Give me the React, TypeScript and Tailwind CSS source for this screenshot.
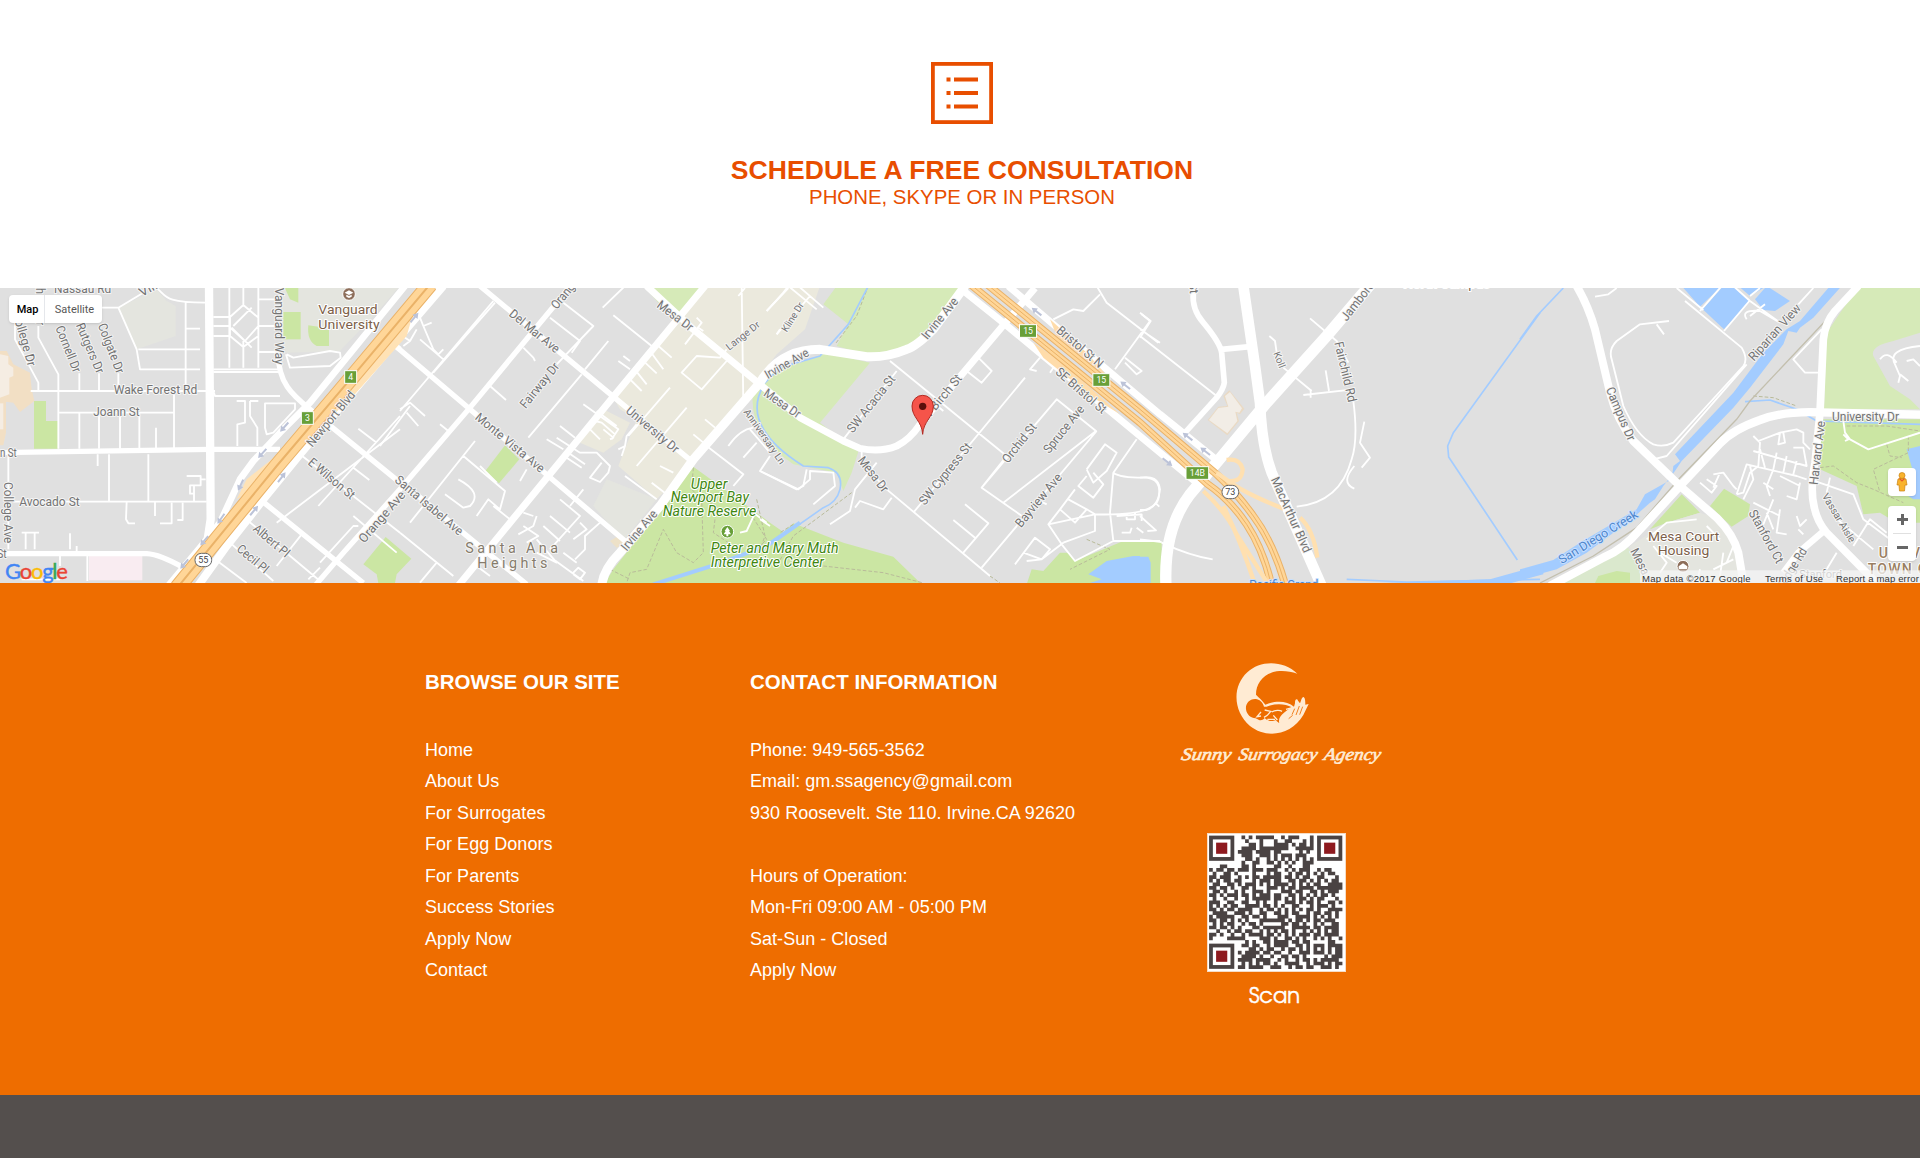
import React from "react";

type Label = [text: string, x1: number, y1: number, x2: number, y2: number, size?: number, kind?: string];
type Tile = {
  x: number;
  areas: [string, string][];
  minor: string;
  mid?: string;
  trails?: string;
  streams?: string;
  labels: Label[];
};

const PARK = "#cbe6a3";
const GOLF = "#d6eab8";
const WATER = "#a3ccff";
const CAMPUS = "#e4e5df";
const BEIGE = "#ebe9dd";

const tiles: Tile[] = [
  {
    x: 0,
    areas: [
      ["M355 65L470 10L500 45L527 60V150L410 190Z", CAMPUS],
      ["M850 0H1200L1130 80L1020 195L860 200L840 150Z", CAMPUS],
      ["M852 0H895V50L870 40Z", PARK],
      ["M850 78H902V160H850Z", PARK],
      ["M925 118L955 122L960 132H987V180H950Q920 165 925 118Z", PARK],
      ["M102 345H138V405H175V488H102Z", PARK],
      ["M0 195H20L40 235L90 260L95 310L103 345L60 378L40 350L0 345Z", "#f2dfc4"],
      ["M0 340H18V440L10 478H0Z", "#f2dfc4"],
      ["M0 205L25 210V235L40 245V270L28 275V325L0 335Z", "#f5ede3"],
      ["M0 352H10V430H0Z", "#f5ede3"],
      ["M267 810H427V883H267Z", "#f9ecf1"],
      ["M1157 753L1234 818L1190 865L1185 891H1135L1130 865L1090 835Z", PARK],
    ],
    minor:
      "M92 315H645M178 380H520M40 647H620M238 262V315M297 262V315M355 262V315M45 100V160L115 290V315M115 120V155L175 265V488M238 380V488M297 380V488M360 380V488M418 380V488M522 315V488M468 425V488M355 65L410 190L420 250H600M415 190H600M557 50V300M557 128H600M305 65H355L430 20M470 6C500 30 490 50 615 50M640 93H690L730 57L775 95V120L735 165L690 125V93M640 120H690V150L730 183L775 150V120H835M640 150H690M688 0V245M730 0V60M730 165V245M775 0V245M775 40H840M775 198H840M640 250H835M640 258H835M640 315L645 330H840M755 65L700 120M695 125L755 185M860 205L880 215L990 195L1020 200L1022 215L990 240L870 245L858 205M710 345H735V410L712 415V480M750 345H775M750 345V390L772 425V480M795 352H885V370L820 440L800 445L795 425ZM293 505V540M327 505V647M445 505V647M25 500V790M380 647L378 700L385 712H405M465 647V690M515 650V712H480M548 650V702H532M560 570H602V598H570V623H582M602 580H617M582 598V645M65 740H117M77 740V790M104 740V790M210 742V790M230 780V795M180 810V840M262 810V885M65 880H180M1075 428L1130 470M1200 390L955 660M1060 545L1108 582M900 505L1200 740M1200 430L830 710M1060 690L1190 800M960 830L1060 720L1075 720M745 705L960 885M690 770L820 885M645 820L740 891M905 745L830 840M960 845L925 880",
    mid: "M0 500L630 490L840 490M0 803H440Q480 805 550 845M835 190C830 290 880 330 930 370L1200 590M780 640L1090 891M1175 170L1200 190",
    labels: [
      ["Nassau Rd", 162, 20, 334, 20],
      ["Villa", 425, 33, 495, -5],
      ["h", 108, 6, 108, 24],
      ["r", 108, 106, 108, 118],
      ["College Dr", 38, 82, 84, 243],
      ["Cornell Dr", 166, 125, 220, 262],
      ["Rutgers Dr", 227, 118, 290, 265],
      ["Colgate Dr", 293, 118, 350, 265],
      ["Vanguard Way", 824, 5, 824, 236],
      ["Wake Forest Rd", 341, 324, 592, 324],
      ["Joann St", 280, 390, 419, 390],
      ["n St", 0, 512, 50, 512],
      ["St", -8, 816, 20, 816],
      ["Avocado St", 58, 661, 239, 661],
      ["College Ave", 12, 588, 12, 772],
      ["Newport Blvd", 937, 485, 1068, 328],
      ["E Wilson St", 922, 533, 1052, 642],
      ["Albert Pl", 757, 732, 856, 816],
      ["Cecil Pl", 708, 793, 793, 864],
      ["Orange Ave", 1093, 773, 1218, 628],
      ["Vanguard", 955, 84, 1133, 84, 40, "poi"],
      ["University", 955, 129, 1139, 129, 40, "poi"],
    ],
  },
  {
    x: 400,
    areas: [
      ["M730 0H910L820 100Z", GOLF],
      ["M910 0H1260L1215 130L1130 205L880 530L770 640L655 540L710 400L660 370L640 335Z", BEIGE],
      ["M570 420L610 370L690 410L665 460L610 500L540 470Z", BEIGE],
      ["M620 580L770 640L670 765L580 660Z", CAMPUS],
      ["M315 478L358 520L297 592L256 555Z", PARK],
      ["M880 542L960 600L1110 710L1150 738L1180 712L1330 770L1480 812L1570 900H610L640 850L790 660Z", PARK],
      ["M630 765L655 750L680 770L650 785Z", "#ede1c8"],
      ["M1060 310Q1090 250 1200 230L1280 200L1410 230L1260 410L1375 497L1355 560L1330 615L1310 560L1180 535Q1040 440 1060 310Z", GOLF],
    ],
    minor:
      "M60 95L70 120L95 110M70 120L100 190L115 205L130 190M0 145L30 165L50 130M30 165L10 180M100 260L285 50M130 220L60 160M490 50L580 120L470 235M450 95L540 165L515 200M0 375L280 45M120 415L145 435M0 370L30 350L75 390M20 380L55 420M270 300L318 342M370 185L400 215L405 225M545 265L385 455M625 165L555 250M675 0L608 65M640 88L755 180M775 180L815 215M750 195L790 250M725 220L770 262M700 245L740 295M685 275L725 315M655 225L690 250M670 210L690 225M550 355L655 430L635 460M590 375L650 420M585 405L605 410L645 445M570 430L600 460M480 420L525 455M470 455L540 500L560 500L590 500L630 540L625 560L600 588L570 575L605 530M440 460L490 490M505 500L555 535M500 515L545 545M675 570L770 640M610 430L640 455L630 460M710 415L680 450L675 480L655 490M675 480L665 510M810 305L685 450M860 365L710 540M660 70M890 95L905 110L855 175M895 125L910 135M980 225L905 310L845 260L890 210L960 215L980 190M1030 355L1025 0M1015 30L1035 6M1100 75L1150 20L1165 0L1250 70M1140 130L1130 145M915 400L945 425M880 445L910 470M920 480L1030 565L1000 600M985 480Q1020 430 1060 425M1030 515L1070 470M1110 510L1080 555L1190 610L1210 600L1220 550M780 540L820 560M755 590L800 625M1050 430L1110 500M225 465L30 710M190 510L315 615L300 670L265 640L230 690M290 590L240 540M175 580Q250 620 210 660L190 665L135 625M280 660L330 700M400 690L370 680M410 690L400 720L355 745M370 720L415 750L380 770M480 640L540 690L450 790M450 690L510 740M430 720L480 765M550 610L510 660M600 710L555 750V790L525 820M540 710L560 730L520 760M410 760L470 830L410 800M460 820L550 885M490 800L530 830M520 860L535 845L555 860L540 880L520 865M30 360L-60 480M0 740L160 870M110 830L60 890M240 800L230 840L270 870M360 585L380 550M1020 740L1040 735L1070 670M1060 680L1100 710",
    mid: "M240 0L640 332L880 530M-25 170L210 370L445 570L675 765M520 -10L400 135L210 365L0 610L-170 800L-260 905M0 585L250 790L380 895",
    trails: "M880 545L875 610L905 640L910 800L880 830L830 800L790 730L740 850L690 860L680 891M910 640L950 660L940 740L1000 780L1080 780M1050 680L1100 760L1080 780M630 850L690 880",
    streams: "M760 895L950 835L1100 780L1200 710",
    labels: [
      ["Orange", 470, 72, 538, -10],
      ["Del Mar Ave", 325, 88, 466, 203],
      ["Fairway Dr", 377, 370, 480, 242],
      ["Monte Vista Ave", 223, 398, 421, 562],
      ["Santa Isabel Ave", -18, 586, 176, 750],
      ["Mesa Dr", 768, 62, 868, 137],
      ["Lange Dr", 988, 194, 1082, 120, 30],
      ["University Dr", 675, 378, 824, 503],
      ["Anniversary Ln", 1030, 378, 1140, 537, 30],
      ["Irvine Ave", 680, 797, 774, 685],
      ["Upper", 872, 608, 982, 608, 41, "park"],
      ["Newport Bay", 812, 649, 1047, 649, 41, "park"],
      ["Nature Reserve", 788, 691, 1069, 691, 41, "park"],
      ["Peter and Mary Muth", 932, 801, 1316, 801, 41, "park"],
      ["Interpretive Center", 932, 842, 1272, 842, 41, "park"],
      ["Santa Ana", 196, 801, 474, 801, 43, "area"],
      ["Heights", 232, 846, 442, 846, 43, "area"],
    ],
  },
  {
    x: 760,
    areas: [
      ["M230 0H610L520 130L440 190L340 212L230 180L265 115L190 55Z", GOLF],
      ["M815 850L850 855L900 800L925 800L945 825L1090 765L1205 765V895H800Z", PARK],
      ["M985 865L1040 825L1120 810H1170V891H990L1025 880Z", WATER],
    ],
    minor:
      "M20 75L85 6M115 0L190 65M150 30L50 145M390 225L740 510L665 605L800 700M410 255L250 460M550 375L520 350M460 680L795 275M840 215L810 250L830 255M880 245L870 260M655 215L695 255L665 290L620 255M665 605L890 340L1008 435L730 650M1200 170L1140 130M1010 0L1040 50L1195 170M1020 25L970 75L940 70L880 100M1145 85L1170 105L1065 250M1095 215L1145 255L1130 265L1095 230M305 495V530L380 610L690 870M350 530L285 610L270 675L210 715M285 665L300 645L370 670L395 635M615 655L685 712L610 800M580 702L645 755M665 845L1010 435M830 640L860 655M1130 460L1060 560L1050 680L1060 765M1060 560Q1080 575 1150 575Q1210 575 1195 640Q1180 690 1005 685L865 715M980 550L1035 475L1070 500L1040 555L1000 590L980 550M1000 560L1030 595L1000 635L955 600L980 570M945 610L900 670L865 715L905 775L945 825L1060 765L1200 765M925 640L980 670L945 710L900 670M980 670L1005 685V735L910 770M765 835L825 755L870 790L845 820L790 800M910 770L845 820L800 825M0 555L115 610L150 580V555L220 560L225 600L160 655M0 700L30 720M1070 690L1145 685V705M1100 680V700H1125V680M1085 740H1110L1115 725M1130 725L1150 740",
    trails: "M-10 640L15 750L0 790M275 620L100 750L50 840M100 715L60 740M190 840L370 860L490 891M980 760L1050 790L930 850M690 870L720 891M325 0L290 90L225 175",
    streams:
      "M325 0L265 115L180 210L60 245L10 295M10 300Q-60 420 130 540L205 545Q250 560 240 610Q230 650 190 665L40 770",
    labels: [
      ["Kline Dr", 80, 140, 133, 57, 30],
      ["Irvine Ave", 23, 280, 150, 208],
      ["Irvine Ave", 502, 163, 597, 47],
      ["Mesa Dr", 8, 328, 112, 398],
      ["SW Acacia St", 278, 443, 408, 280],
      ["W Birch St", 500, 408, 608, 278],
      ["Mesa Dr", 292, 524, 368, 622],
      ["SW Cypress St", 494, 660, 637, 483],
      ["Orchid St", 744, 534, 832, 424],
      ["Spruce Ave", 868, 505, 975, 370],
      ["Bayview Ave", 783, 727, 908, 575],
      ["Bristol St N", 887, 137, 1017, 248],
      ["SE Bristol St", 884, 262, 1026, 385],
    ],
  },
  {
    x: 1140,
    areas: [
      ["M203 402L235 362L262 360L250 330L268 313L313 368L300 385L290 380L297 405L262 448Z", "#eadac4"],
      ["M207 402L235 366L265 362L255 330L270 318L306 367L298 380L286 377L292 405L262 442Z", "#f2ede6"],
      ["M0 762L62 775V891H0Z", PARK],
      ["M0 812H25L32 830V891H0Z", WATER],
    ],
    minor:
      "M0 150L230 330M0 80L32 105L0 155M510 97L590 165L625 230M388 150L405 165L410 200M430 245L515 315M490 327L640 310M512 310V335M557 253L567 315M600 265H625M640 345Q655 460 635 520Q600 650 470 662M673 407L660 470L690 515L665 545M643 540Q600 590 643 608M0 575Q55 565 60 610Q55 660 20 672H0M45 650L58 662M0 690L48 733L22 735M65 768L0 760M65 770Q150 810 218 820",
    streams: "M1200 80L940 440L923 480L926 513L1132 822M620 880L800 888L1200 880",
    labels: [
      ["St", 146, -10, 150, 24],
      ["Jamboree", 620, 107, 716, -15],
      ["Koll", 400, 202, 418, 248, 30],
      ["Fairchild Rd", 583, 170, 625, 350],
      ["MacArthur Blvd", 392, 580, 492, 803],
      ["North Campus", 790, 6, 1050, 6, 36, "poi"],
      ["Pacific Grand", 328, 910, 535, 910, 36, "water"],
    ],
  },
  {
    x: 1520,
    areas: [
      ["M485 0H605L540 62Z", WATER],
      ["M610 0H640L690 45L612 130L548 70Z", WATER],
      ["M655 0H740L690 30Z", WATER],
      ["M740 0L810 45L765 75L730 72L705 40Z", WATER],
      ["M1015 0H1200V140L1120 165Q1050 180 1060 210L1110 300L1170 340L1200 370H912L920 140Z", GOLF],
      ["M905 400H1200V710H1130L1080 680L1030 685L1010 600L900 550Z", PARK],
      ["M1160 490L1200 480V640H1180L1150 620L1180 560Z", WATER],
      ["M485 625L540 680L440 710L390 730Z", PARK],
      ["M570 660L612 608L690 655L685 690L635 722Z", PARK],
      ["M540 680L600 700L640 780L670 891H350L330 780L440 710Z", CAMPUS],
      ["M100 891L320 780L360 830L370 891Z", "#dae8cd"],
      ["M235 870L290 855L330 860V891H225Z", PARK],
      ["M965 0L880 95L840 125L830 140L805 135L790 175L690 305L640 365L485 525L465 555L430 600L405 640L390 650L340 695L200 800L110 850L0 880V850L100 822L180 770L350 670L375 625L455 580L460 540L480 525L465 505L640 320L730 200L800 130L840 105L930 0Z", WATER],
    ],
    minor:
      "M225 32L265 25L290 6M447 105L360 115L290 165Q265 190 275 220L310 360Q350 450 400 475Q430 485 460 470L670 240Q685 220 665 185L495 45M410 115L432 145M470 6L550 72M605 0L540 75M688 45L612 135M640 0L690 45L780 110M680 100Q660 70 720 75L780 110M735 55L690 90M690 30L720 6M880 6L835 55M400 520L440 510L680 235M905 130L820 220L855 260H895M1200 180Q1100 190 1125 235L1140 270L1135 290M1080 220Q1100 190 1130 230M1140 265L1165 285M1160 225L1180 220L1200 240M970 405L975 440L990 460L1045 490L1200 440M970 445L985 460L975 465M700 450L720 470L715 540L690 560L670 620L650 625M715 465L780 440L830 430L850 440V470L870 490M780 440L775 475L795 470L790 440M820 485H850L860 540L700 495M650 625L680 535L830 570L860 580M690 540L700 580L670 640M720 490L735 545M770 500L760 550M800 510L790 560M830 525L820 565M760 550L740 600L750 630M730 590L760 610M840 590L830 640L800 630M780 570L840 600M760 640L720 740M700 650L780 690M740 680L760 730M780 670L770 740L800 745M830 690L840 720L860 700M835 730L850 745M540 590L575 620L590 600L560 580M580 565L610 560L640 600L650 610M580 605L600 560M870 580L1000 625L1010 650M930 575L920 620M890 570L880 590M1000 780L1050 700L1100 740M1010 650L1030 700L1110 760M940 690L1060 790M950 800L920 850M380 760L440 710L530 700M420 800L470 830M400 780L440 830L420 860M560 720L600 760M640 820L580 850M610 800L600 870M540 850L530 891M640 780L620 830",
    trails: "M900 545L940 540L1010 590L1060 610L1150 650M1165 450V500L1060 550L1080 620M1100 475L1110 510L1145 515M980 420L1100 420L1200 435M700 330L760 335L830 360",
    streams: "M130 6L50 90L0 160M675 347L750 342L830 370L890 405L1200 415",
    labels: [
      ["Campus Dr", 257, 310, 324, 467],
      ["Riparian View", 702, 227, 845, 68],
      ["University Dr", 936, 404, 1137, 404],
      ["Harvard Ave", 893, 598, 916, 406],
      ["Stanford Ct", 685, 680, 770, 835],
      ["Vassar Aisle", 905, 630, 990, 772, 31],
      ["Mesa", 330, 795, 368, 870],
      ["Ridge Rd", 795, 905, 862, 795],
      ["Stanford", 838, 876, 966, 876, 31],
      ["San Diego Creek", 125, 835, 357, 692, 37, "water"],
      ["Mesa Court", 384, 765, 598, 765, 41, "poi"],
      ["Housing", 413, 808, 568, 808, 41, "poi"],
      ["UNIV", 1076, 816, 1200, 816, 42, "town"],
      ["TOWN CTR", 1043, 863, 1280, 863, 42, "town"],
    ],
  },
];

const labelClass: Record<string, string> = {
  road: "fill-[#737373] stroke-[#f5f5f5]",
  poi: "fill-[#7d5f4a] stroke-white",
  park: "fill-[#40870f] stroke-white italic",
  area: "fill-[#867c6c] stroke-[#f5f5f5]",
  town: "fill-[#9b7f62] stroke-white font-medium",
  water: "fill-[#4d86cc] stroke-[#c9e0ff]",
};

function MapLabel({ label }: { label: Label }) {
  const [text, x1, y1, x2, y2, size = 38, kind = "road"] = label;
  const angle = (Math.atan2(y2 - y1, x2 - x1) * 180) / Math.PI;
  return (
    <text
      transform={`translate(${x1} ${y1}) rotate(${angle})`}
      textLength={Math.hypot(x2 - x1, y2 - y1)}
      lengthAdjust={kind === "area" || kind === "town" ? "spacing" : "spacingAndGlyphs"}
      fontSize={size}
      strokeWidth={6}
      strokeLinejoin="round"
      paintOrder="stroke"
      className={labelClass[kind]}
    >
      {text}
    </text>
  );
}

const at = (x: number) => `translate(${x * 3} 0)`;

function Freeway({ d, w }: { d: string; w: number }) {
  return (
    <>
      <path d={d} stroke="#eab268" strokeWidth={w} />
      <path d={d} stroke="#ffd698" strokeWidth={w - 6} />
      <path d={d} stroke="#eab268" strokeWidth={w > 30 ? 6 : 3} />
    </>
  );
}

function Exit({ x, y, n, w = 36 }: { x: number; y: number; n: string; w?: number }) {
  return (
    <g transform={`translate(${x} ${y})`}>
      <rect x={-w / 2} y={-19} width={w} height={38} fill="#689f38" stroke="#fff" strokeWidth={3} />
      <text y={9} fontSize={26} textAnchor="middle" className="fill-white">{n}</text>
    </g>
  );
}

function Shield({ x, y, n }: { x: number; y: number; n: string }) {
  return (
    <g transform={`translate(${x} ${y})`}>
      <rect x={-25} y={-20} width={50} height={40} rx={19} fill="#fff" stroke="#666" strokeWidth={3} />
      <text y={9} fontSize={27} textAnchor="middle" className="fill-[#444]">{n}</text>
    </g>
  );
}

function Arrow({ x, y, a }: { x: number; y: number; a: number }) {
  return <path transform={`translate(${x} ${y}) rotate(${a})`} d="M-18 -3H3V-10L19 0L3 10V3H-18Z" fill="#bcc3d8" />;
}

function MapCanvas() {
  return (
    <svg className="block h-full w-full font-['Roboto',sans-serif]" viewBox="0 6 5760 885" preserveAspectRatio="none" fill="none">
      <rect width="5760" height="900" fill="#e0e0e0" />
      {tiles.map((t) => (
        <g key={t.x} transform={at(t.x)}>
          {t.areas.map(([d, fill], i) => <path key={i} d={d} fill={fill} />)}
        </g>
      ))}
      {tiles.map((t) => (
        <g key={t.x} transform={at(t.x)} strokeLinejoin="round">
          {t.trails && <path d={t.trails} stroke="#b9bb9a" strokeWidth={3} strokeDasharray="11 6" />}
          {t.streams && <path d={t.streams} stroke="#a3ccff" strokeWidth={t.x === 400 ? 12 : 5} />}
          <path d={t.minor} stroke="#fff" strokeWidth={5.5} />
        </g>
      ))}
      <g transform={at(1140)}>
        <path d="M720 891L1050 880L1210 835V865L1100 895Z" fill="#a3ccff" />
      </g>
      <g transform={at(1520)} stroke="#c3bfae" strokeWidth={4}>
        <path d="M1000 6L930 90L690 345L650 400L480 575L350 725L220 810L60 891" />
      </g>
      <g stroke="#fff" strokeLinejoin="round" strokeWidth={16}>
        {tiles.map((t) => t.mid && <path key={t.x} transform={at(t.x)} d={t.mid} />)}
        <path d="M627 0L632 700L620 780" strokeWidth={25} />
        <path d="M500 905L600 785L660 710L720 580L760 525L840 440L930 350L1215 0" strokeWidth={20} />
        <path d="M590 905L680 780L790 640L900 505L1175 180L1330 0" strokeWidth={24} />
        <path transform={at(400)} d="M915 0L640 332L445 570L170 905" strokeWidth={21} />
        <g transform={at(760)}>
          <path d="M-340 0L-200 130L0 295L120 395L250 465L300 487Q360 500 410 480Q450 460 480 415L730 118L825 6" strokeWidth={21} />
          <path d="M615 0L520 130Q470 180 440 190Q380 215 320 212L180 190Q60 190 0 290L-200 520L-300 660L-420 800Q-470 850 -475 900" strokeWidth={27} />
          <path d="M600 6L730 110L1200 500L1310 590" strokeWidth={21} />
          <path d="M745 0L880 115L1200 385L1380 530" strokeWidth={21} />
        </g>
        <g transform={at(1140)}>
          <path d="M160 20Q155 70 190 110Q240 170 245 200L253 290Q250 310 230 335L135 440M245 190L330 182" strokeWidth={17} />
          <path d="M700 -15L560 150L380 350L230 530L150 625Q70 730 78 900" strokeWidth={34} />
          <path d="M310 0L345 240L360 350Q365 480 395 560L545 900" strokeWidth={32} />
        </g>
        <g transform={at(1520)} strokeWidth={25}>
          <path d="M1210 386L900 379Q790 375 720 402Q640 430 600 472L480 600L360 730Q310 790 250 815L90 900" />
          <path d="M170 0Q205 60 225 130L270 320Q290 400 340 465L480 600L590 695Q640 745 655 800L672 900" strokeWidth={24} />
          <path d="M1015 0L945 75Q915 110 910 160L900 380L885 530Q870 610 882 660Q890 705 920 740L1070 891" strokeWidth={23} />
          <path d="M908 738L835 800L790 860" strokeWidth={20} />
        </g>
      </g>
      <path d="M1240 80L1050 300L900 480L1060 330L1220 150ZM840 500L740 580L710 640L780 600ZM830 570L760 660L740 690Z" fill="#ffe2b5" />
      <path d="M1215 110L890 490M885 500L840 560" stroke="#a3ccff" strokeWidth={7} />
      <Freeway d="M532 905L830 540L1015 322L1290 -5" w={48} />
      <g transform={at(760)}>
        <path d="M820 170L850 215L1000 335L1080 385L900 225ZM870 100L890 150L1050 280L980 200Z" fill="#ffdcaa" />
        <Freeway d="M625 -10L1140 410L1340 592Q1410 640 1460 715Q1510 790 1535 900" w={23} />
        <Freeway d="M675 -10L1140 370L1370 565Q1430 620 1480 690Q1540 770 1577 900" w={23} />
      </g>
      <g transform={at(1140)} stroke="#ffe0b0" strokeWidth={13}>
        <path d="M190 615Q260 680 290 745L385 895M250 660Q300 760 345 895" />
        <path d="M260 522Q300 515 308 550Q305 590 265 585L230 560M265 585Q310 620 430 668M480 695Q520 730 532 815" />
        <path d="M395 560L470 730" stroke="#fff" strokeWidth={28} />
      </g>
      <Arrow x={853} y={423} a={132} /><Arrow x={787} y={502} a={132} /><Arrow x={722} y={597} a={115} /><Arrow x={663} y={698} a={125} />
      <Arrow x={613} y={764} a={130} /><Arrow x={553} y={834} a={130} /><Arrow x={845} y={574} a={-52} /><Arrow x={762} y={674} a={-50} />
      <Arrow x={1243} y={95} a={-50} />
      <g transform={at(760)}><Arrow x={830} y={77} a={218} /><Arrow x={1096} y={298} a={218} /></g>
      <g transform={at(1140)}><Arrow x={143} y={452} a={218} /><Arrow x={196} y={496} a={218} /><Arrow x={82} y={528} a={38} /></g>
      {tiles.map((t) => (
        <g key={t.x} transform={at(t.x)}>
          {t.labels.map((l, i) => <MapLabel key={i} label={l} />)}
        </g>
      ))}
      <Exit x={1052} y={273} n="4" />
      <Exit x={922} y={396} n="3" />
      <Shield x={610} y={822} n="55" />
      <g transform={at(760)}>
        <Exit x={804} y={135} n="15" w={51} />
        <Exit x={1024} y={282} n="15" w={51} />
        <path d="M488 445C486 405 456 395 456 360A32 32 0 0 1 520 360C520 395 490 405 488 445Z" fill="#f5544a" stroke="#b32a22" strokeWidth={3} />
        <circle cx={488} cy={361} r={11} fill="#5a0f0b" />
      </g>
      <g transform={at(1140)}>
        <Exit x={172} y={561} n="14B" w={68} />
        <Shield x={271} y={618} n="73" />
      </g>
      <circle cx={1047} cy={24} r={19} fill="#8d6e5a" stroke="#fff" strokeWidth={3} />
      <path d="M1034 20L1047 13L1060 20L1047 27ZM1039 26V32L1047 36L1055 32V26L1047 30Z" fill="#fff" />
      <circle cx={2182} cy={737} r={19} fill="#689f38" stroke="#fff" strokeWidth={3} />
      <path d="M2182 723L2190 735H2187L2193 745H2185V751H2179V745H2171L2177 735H2174Z" fill="#fff" />
      <circle cx={5049} cy={841} r={18} fill="#8d6e5a" stroke="#fff" strokeWidth={3} />
      <path d="M5036 841L5049 832L5062 841V850H5036Z" fill="#fff" />
      <rect x={4920} y={853} width={840} height={40} fill="#f5f5f5" fillOpacity={0.75} />
    </svg>
  );
}

function Pegman() {
  return (
    <svg viewBox="0 0 12 20" className="h-5 w-3">
      <path d="M2 7Q6 5 10 7L11 13H9L8.500 19H3.500L3 13H1Z" fill="#f9b32d" stroke="#c98312" strokeWidth=".7" />
      <circle cx="6" cy="3.500" r="3" fill="#f9b32d" stroke="#c98312" strokeWidth=".7" />
      <path d="M3.500 6.500L6 9L8.500 6.500" fill="none" stroke="#e5592b" strokeWidth="1.200" />
    </svg>
  );
}

function LocationMap() {
  return (
    <section className="relative h-[295px] overflow-hidden bg-[#e0e0e0]">
      <MapCanvas />
      <div className="absolute left-[9px] top-[7px] flex h-7 items-center rounded-sm bg-white font-['Roboto',sans-serif] text-[11px] shadow">
        <span className="flex h-full w-9 items-center justify-center border-r border-gray-200 pl-0.5 pt-0.5 font-medium text-black">Map</span>
        <span className="flex h-full w-[57px] items-center justify-center pl-0.5 pt-0.5 text-[#565656]">Satellite</span>
      </div>
      <div className="absolute bottom-0 left-[5px] flex font-['Lato','Open_Sans',sans-serif] text-[22px] leading-[25px] tracking-[-1.3px] [-webkit-text-stroke:0.4px_currentColor]">
        <span className="text-[#4285f4]">G</span>
        <span className="text-[#ea4335]">o</span>
        <span className="text-[#fbbc05]">o</span>
        <span className="text-[#4285f4]">g</span>
        <span className="text-[#34a853]">l</span>
        <span className="text-[#ea4335]">e</span>
      </div>
      <div className="absolute right-1 top-[180px] flex flex-col gap-2.5">
        <div className="flex size-7 items-center justify-center rounded-sm bg-white shadow">
          <Pegman />
        </div>
        <div className="flex h-[55px] w-7 flex-col items-center rounded-sm bg-white text-[#666] shadow">
          <svg viewBox="0 0 28 55" className="h-full w-full" stroke="currentColor">
            <path d="M9 13.500H20M14.500 8V19M9 41.500H20" strokeWidth="3" />
            <path d="M5 27.500H23" strokeWidth="1" stroke="#e0e0e0" />
          </svg>
        </div>
      </div>
      <div className="absolute bottom-[-2px] left-[1642px] flex whitespace-nowrap font-['Liberation_Sans',Arial,sans-serif] text-[9.500px] leading-3 text-[#333]">
        <span className="w-[123px] tracking-[0.25px]">Map data ©2017 Google</span>
        <span className="w-[71px] tracking-[0.2px]">Terms of Use</span>
        <span className="tracking-[0.15px]">Report a map error</span>
      </div>
    </section>
  );
}

const qrRows = [
  ".........#.#.#####..#.###...#........",
  "..........#...#...#..##...#.#........",
  "...........##.#...####.#.##.#........",
  ".........####.########..#####........",
  "........####.####.##.....#.#.........",
  ".........###..###.#.###.###..........",
  "..........##.#..#.#.#.#.#.#.#........",
  ".........#..##..##.#.#.#..###........",
  "...##....##.#.....##..#...##.........",
  "#.##.##.###.###.###..#.#.###..#.##...",
  ".#..##.#....#...#.##..#.##.#.#.#.##..",
  "##.###..#.#.##.#####.##.#.##..##...#.",
  "#.#.##.##...#.###.##..##.##.#.#.#.##.",
  ".##..##.#.###.#.#.####.#.#.#.##..####",
  "##.##.#..##.#...###.#.##.####.#######",
  ".##.#..#.#..###.#...###.##..##.#.###.",
  "##.#.###.##.#.###.##..##.#.#.#.##.#..",
  ".#..#..#..#.#####.##.#.#.##.#.##...#.",
  "###..##..##..#.#..#..###.#.##.#..##.#",
  "#.#.#.##..####.##.#.#..##...#.###.#..",
  "##.#.##.####..#.##.#.#.#.#.##.#..####",
  ".####..###.#..##..##.#.##..#.##.##.#.",
  "#.#####..##.##.#...###..####.#.#.#.#.",
  "##.##.#.#.#...#######.#.##.#.##.###..",
  ".#.#.##..#.##.#.....##.##.#..#.#..##.",
  "##.##.#.#...##.######..#####.##.####.",
  "..#..#.##.##..#.#.#.##.#..#.#.#.#.##.",
  "##.#..#..#.####.##.#.#.#.###.##.####.",
  "#....#####....###.#..##.#.#..#.#.#..#",
  "..........#.#..##.####.##.##.....##..",
  ".........##.##..#.####..##.#.###.####",
  "...........##.#.##..#.##.#.#.#.#.#.##",
  "........#.####.##.##..#..###.###.#.##",
  ".........####.#..#..##.##.#.....#.###",
  "........####.####..#.#..#.##.#.#####.",
  ".........#.#.#.##.#..####..#.###.#.##",
  "........##.####..###..#.##.##..###.#.",
];

function Finder({ x, y }: { x: number; y: number }) {
  return (
    <g transform={`translate(${x} ${y})`}>
      <rect width={7} height={7} fill="#4a4343" />
      <rect x={1.050} y={1.050} width={4.900} height={4.900} fill="#fff" />
      <rect x={1.950} y={1.950} width={3.100} height={3.100} fill="#8e1a1f" />
    </g>
  );
}

function QrCode() {
  return (
    <svg viewBox="-0.300 -0.450 38.050 38.050" className="h-[139px] w-[139px] border border-[#f6dcc4] bg-white">
      <path
        fill="#4a4343"
        d={qrRows.flatMap((row, y) => [...row].map((c, x) => (c === "#" ? `M${x} ${y}h1.03v1.03h-1.03z` : ""))).join("")}
      />
      <Finder x={0} y={0} />
      <Finder x={30} y={0} />
      <Finder x={0} y={30} />
    </svg>
  );
}

const logoWords: [string, number, number][] = [
  ["Sunny", 62, 150],
  ["Surrogacy", 234, 236],
  ["Agency", 490, 170],
];

function AgencyLogo() {
  return (
    <svg viewBox="0 0 720 450" className="h-[150px] w-60">
      <path
        d="M412 101C370 60 300 60 262 97C215 140 220 215 270 258C320 298 395 285 430 225L446 192L436 194C436 185 436 175 431 171C424 172 424 182 420 190L414 182C411 174 404 178 405 190L402 200C380 180 340 183 316 194C308 182 296 172 288 164C288 130 310 100 350 94C372 92 392 94 412 101Z"
        fill="#ffebd3"
      />
      <path d="M287 177C267 176 256 192 258 208C260 224 272 234 287 235L297 240C305 242 312 238 314 234C326 246 340 244 346 240L358 250C354 236 362 226 372 218L386 207L395 202C376 190 342 190 320 200L312 200C308 186 298 178 287 177Z" fill="#ee6d00" />
      <path d="M303 216L291 230L303 228M314 210L332 214L322 226L312 232M335 216C345 210 360 210 366 214M322 238L345 238M340 226L352 240M378 208L396 203" fill="none" stroke="#ffebd3" strokeWidth="4" />
      <path d="M408 225L418 198M419 224L428 200M398 226L386 236M404 206L396 224" fill="none" stroke="#ee6d00" strokeWidth="2.500" />
      <g fill="#ffebd3" stroke="#ffebd3" strokeWidth="2" className="font-['Brush_Script_MT','Liberation_Serif',cursive] text-[52px] italic">
        {logoWords.map(([word, x, w]) => (
          <text key={word} transform={`translate(${x} 359) skewX(-10)`} textLength={w} lengthAdjust="spacingAndGlyphs">
            {word}
          </text>
        ))}
      </g>
    </svg>
  );
}

const siteLinks = ["Home", "About Us", "For Surrogates", "For Egg Donors", "For Parents", "Success Stories", "Apply Now", "Contact"];
const contactLines = [
  "Phone: 949-565-3562",
  "Email: gm.ssagency@gmail.com",
  "930 Roosevelt. Ste 110. Irvine.CA 92620",
  "",
  "Hours of Operation:",
  "Mon-Fri 09:00 AM - 05:00 PM",
  "Sat-Sun - Closed",
  "Apply Now",
];

function FooterColumn({ title, lines, className }: { title: string; lines: string[]; className: string }) {
  return (
    <div className={className}>
      <h3 className="mb-[37px] mt-[83px] text-[20.500px] font-bold leading-8">{title}</h3>
      <ul className="text-lg tracking-[0.03px]">
        {lines.map((line, i) => (
          <li key={i} className="h-[31.430px] whitespace-nowrap leading-[31.430px]">{line}</li>
        ))}
      </ul>
    </div>
  );
}

export default function App() {
  return (
    <main className="flex h-[1158px] w-[1920px] flex-col overflow-hidden bg-white font-['Liberation_Sans',Arial,sans-serif]">
      <section className="flex h-72 flex-col items-center pl-1 pt-[62px] text-[#e84e00]">
        <svg viewBox="0 0 62 62" className="size-[62px]" fill="none" stroke="currentColor">
          <rect x="1.900" y="1.900" width="58.200" height="58.200" strokeWidth="3.800" />
          <path d="M15.500 17.500h4M15.500 31h4M15.500 44.500h4M23 17.500h24M23 31h24M23 44.500h24" strokeWidth="4" />
        </svg>
        <h2 className="mt-[31px] text-[26.500px] font-bold leading-[30px] tracking-[0.080px]">SCHEDULE A FREE CONSULTATION</h2>
        <p className="text-[20.400px] leading-6">PHONE, SKYPE OR IN PERSON</p>
      </section>
      <LocationMap />
      <footer className="flex h-[512px] bg-[#ee6d00] pl-[425px] text-white">
        <FooterColumn title="BROWSE OUR SITE" lines={siteLinks} className="w-[325px]" />
        <FooterColumn title="CONTACT INFORMATION" lines={contactLines} className="w-[410px]" />
        <div className="flex w-60 flex-col items-center pt-[57px]">
          <AgencyLogo />
          <div className="ml-[-7px] mt-[43px]">
            <QrCode />
          </div>
          <p className="ml-[-11px] mt-[9px] text-[21px] leading-8 [-webkit-text-stroke:0.4px_white] [font-family:'TeX_Gyre_Adventor','Lato',sans-serif]">Scan</p>
        </div>
      </footer>
      <div className="flex-1 bg-[#544f4d]" />
    </main>
  );
}
